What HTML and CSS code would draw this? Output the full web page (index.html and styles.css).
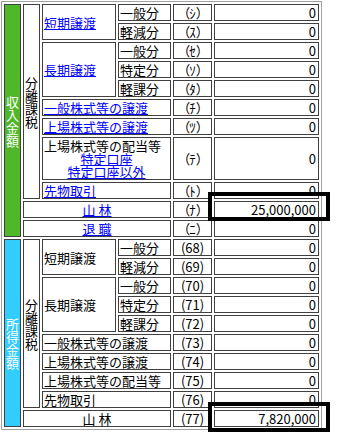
FILE: index.html
```html
<!DOCTYPE html>
<html lang="ja">
<head>
<meta charset="utf-8">
<title>分離課税</title>
<link rel="stylesheet" href="styles.css">
</head>
<body>
<div class="sheet">
  <div class="cell cat income r11"><span class="vtext">収入金額</span></div>
  <div class="cell r9 vcell"><span class="vtext">分離課税</span></div>
  <div class="cell r2"><a href="#">短期譲渡</a></div>
  <div class="cell">一般分</div><div class="cell code"><span class="po">（</span>ｼ<span class="pc">）</span></div><div class="cell num">0</div>
  <div class="cell">軽減分</div><div class="cell code"><span class="po">（</span>ｽ<span class="pc">）</span></div><div class="cell num">0</div>
  <div class="cell r3"><a href="#">長期譲渡</a></div>
  <div class="cell">一般分</div><div class="cell code"><span class="po">（</span>ｾ<span class="pc">）</span></div><div class="cell num">0</div>
  <div class="cell">特定分</div><div class="cell code"><span class="po">（</span>ｿ<span class="pc">）</span></div><div class="cell num">0</div>
  <div class="cell">軽課分</div><div class="cell code"><span class="po">（</span>ﾀ<span class="pc">）</span></div><div class="cell num">0</div>
  <div class="cell w2"><a href="#">一般株式等の譲渡</a></div><div class="cell code"><span class="po">（</span>ﾁ<span class="pc">）</span></div><div class="cell num">0</div>
  <div class="cell w2"><a href="#">上場株式等の譲渡</a></div><div class="cell code"><span class="po">（</span>ﾂ<span class="pc">）</span></div><div class="cell num">0</div>
  <div class="cell w2 block">上場株式等の配当等<div class="links"><a href="#">特定口座</a><a href="#">特定口座以外</a></div></div><div class="cell code"><span class="po">（</span>ﾃ<span class="pc">）</span></div><div class="cell num">0</div>
  <div class="cell w2"><a href="#">先物取引</a></div><div class="cell code"><span class="po">（</span>ﾄ<span class="pc">）</span></div><div class="cell num">0</div>
  <div class="cell w3"><a href="#">山 林</a></div><div class="cell code"><span class="po">（</span>ﾅ<span class="pc">）</span></div><div class="cell num">25,000,000</div>
  <div class="cell w3"><a href="#">退 職</a></div><div class="cell code"><span class="po">（</span>ﾆ<span class="pc">）</span></div><div class="cell num">0</div>

  <div class="cell cat spend r10"><span class="vtext">所得金額</span></div>
  <div class="cell r9 vcell"><span class="vtext">分離課税</span></div>
  <div class="cell r2">短期譲渡</div>
  <div class="cell">一般分</div><div class="cell code">(68)</div><div class="cell num">0</div>
  <div class="cell">軽減分</div><div class="cell code">(69)</div><div class="cell num">0</div>
  <div class="cell r3">長期譲渡</div>
  <div class="cell">一般分</div><div class="cell code">(70)</div><div class="cell num">0</div>
  <div class="cell">特定分</div><div class="cell code">(71)</div><div class="cell num">0</div>
  <div class="cell">軽課分</div><div class="cell code">(72)</div><div class="cell num">0</div>
  <div class="cell w2">一般株式等の譲渡</div><div class="cell code">(73)</div><div class="cell num">0</div>
  <div class="cell w2">上場株式等の譲渡</div><div class="cell code">(74)</div><div class="cell num">0</div>
  <div class="cell w2">上場株式等の配当等</div><div class="cell code">(75)</div><div class="cell num">0</div>
  <div class="cell w2">先物取引</div><div class="cell code">(76)</div><div class="cell num">0</div>
  <div class="cell w3">山 林</div><div class="cell code">(77)</div><div class="cell num">7,820,000</div>
</div>
<div class="mark mark-a"></div>
<div class="mark mark-b"></div>
</body>
</html>
```

FILE: styles.css
```css
html, body {
  margin: 0;
  padding: 0;
  background: #fff;
}
body {
  font-family: "Noto Sans CJK JP", "Noto Sans", sans-serif;
  font-size: 13px;
  line-height: 13px;
  color: #000;
}
.sheet {
  display: inline-grid;
  margin: 1px 0 0 1px;
  border: 1px solid #a0a0a0;
  padding: 2px;
  gap: 2px;
  grid-template-columns: 17px 17px 74px 53px 39px 105px;
  grid-template-rows: repeat(7, 17px) 43px repeat(13, 17px);
}
.cell {
  box-sizing: border-box;
  border: 1px solid #404040;
  padding: 1px;
  display: flex;
  align-items: center;
  white-space: nowrap;
  overflow: hidden;
}
.r2 { grid-row: span 2; }
.r3 { grid-row: span 3; }
.r9 { grid-row: span 9; }
.r10 { grid-row: span 10; }
.r11 { grid-row: span 11; }
.w2 { grid-column: span 2; }
.w3 { grid-column: span 3; justify-content: center; }
.code {
  justify-content: center;
  padding: 1px 0;
}
.po, .pc {
  display: inline-block;
  width: 12px;
}
.po { text-align: right; }
.pc { text-align: left; }
.num { justify-content: flex-end; padding-right: 2px; }
.block { display: block; }
.links {
  display: flex;
  flex-direction: column;
  align-items: center;
}
a {
  color: #0000ff;
  text-decoration: underline;
}
.vcell, .cat {
  justify-content: center;
  white-space: normal;
}
.vtext {
  width: 13px;
  word-break: break-all;
  text-align: center;
}
.cat { color: #fff; }
.income { background: #50b62a; }
.spend { background: #33ccff; padding-top: 20px; }
.mark {
  position: absolute;
  left: 208px;
  width: 122px;
  box-sizing: border-box;
  border: 4px solid #000;
}
.mark-a { top: 192px; height: 29px; }
.mark-b { top: 402px; height: 30px; }
```
